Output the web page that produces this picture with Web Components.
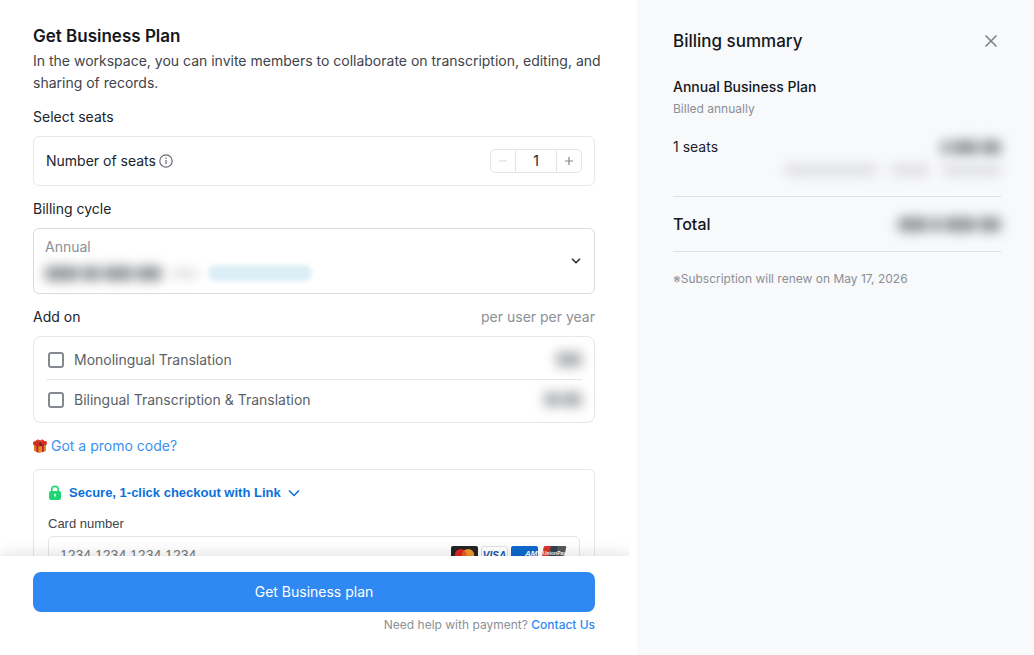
<!DOCTYPE html>
<html lang="en">
<head>
<meta charset="utf-8">
<meta name="viewport" content="width=device-width, initial-scale=1">
<title>Get Business Plan</title>
<style>
  body {
    margin: 0;
    font: 14px/22px Inter, "Liberation Sans", sans-serif;
    color: #20242b;
    background: #fff;
  }
</style>
</head>
<body>
<plan-checkout>
  <plan-heading>
    <span slot="title">Get Business Plan</span>
    In the workspace, you can invite members to collaborate on transcription, editing, and sharing of records.
  </plan-heading>

  <form-section>
    <span slot="label">Select seats</span>
    <seat-stepper value="1">Number of seats</seat-stepper>
  </form-section>

  <form-section>
    <span slot="label">Billing cycle</span>
    <cycle-select></cycle-select>
  </form-section>

  <form-section>
    <span slot="label">Add on</span>
    <span slot="hint">per user per year</span>
    <addon-list>
      <addon-option bars="26">Monolingual Translation</addon-option>
      <addon-option bars="16,20">Bilingual Transcription &amp; Translation</addon-option>
    </addon-list>
  </form-section>

  <promo-link>Got a promo code?</promo-link>
  <card-form></card-form>

  <checkout-footer slot="footer">Get Business plan</checkout-footer>
  <billing-summary slot="summary"></billing-summary>
</plan-checkout>

<script>
/** Create an HTML template element from a string template. */
const html = (strings, ...expressions) => {
  const template = document.createElement('template')
  template.innerHTML = strings.reduce((result, str, i) => result + str + (expressions[i] ?? ''), '')
  return template
}

/** Base class: clones the static template of the subclass into an open shadow root. */
class TemplateElement extends HTMLElement {
  constructor() {
    super()
    this.attachShadow({ mode: 'open' })
    this.shadowRoot.appendChild(this.constructor.template.content.cloneNode(true))
  }

  $(selector) {
    return this.shadowRoot.querySelector(selector)
  }
}

/**
 * A hidden amount, drawn as soft bars.
 *
 * @example
 *
 * <hidden-amount bars="40,20"></hidden-amount>
 */
class HiddenAmount extends TemplateElement {
  static localName = 'hidden-amount'

  static template = html`
    <style>
      :host {
        display: flex;
        gap: 3px;
        filter: blur(6px);
        color: #97999d;
      }
      i {
        height: var(--bar-height, 15px);
        border-radius: 4px;
        background: currentColor;
      }
    </style>
  `

  connectedCallback() {
    this.setAttribute('aria-hidden', 'true')
    for (const width of this.getAttribute('bars').split(',')) {
      const bar = document.createElement('i')
      bar.style.width = `${width}px`
      this.shadowRoot.appendChild(bar)
    }
  }
}

class PlanCheckout extends TemplateElement {
  static localName = 'plan-checkout'

  static template = html`
    <style>
      :host {
        display: grid;
        grid-template-columns: 637fr 397fr;
        height: 100vh;
      }
      main {
        display: flex;
        flex-direction: column;
        min-width: 0;
        min-height: 0;
      }
      .content {
        display: flex;
        flex: 1;
        flex-direction: column;
        gap: 12px;
        min-height: 0;
        padding: 22px 42px 0 33px;
        overflow-y: auto;
        scrollbar-width: none;
      }
      ::slotted(*) {
        flex-shrink: 0;
      }
    </style>
    <main>
      <div class="content"><slot></slot></div>
      <slot name="footer"></slot>
    </main>
    <slot name="summary"></slot>
  `
}

class PlanHeading extends TemplateElement {
  static localName = 'plan-heading'

  static template = html`
    <style>
      :host {
        display: block;
        margin-right: -12px;
      }
      h1 {
        margin: 0;
        font-size: 17px;
        font-weight: 600;
        line-height: 28px;
        color: #14171c;
      }
      p {
        margin: 0;
        color: #40444b;
      }
    </style>
    <h1><slot name="title"></slot></h1>
    <p><slot></slot></p>
  `
}

class FormSection extends TemplateElement {
  static localName = 'form-section'

  static template = html`
    <style>
      :host {
        display: flex;
        flex-direction: column;
        gap: 8px;
      }
      header {
        display: flex;
        justify-content: space-between;
      }
      h2 {
        margin: 0;
        font-size: inherit;
        font-weight: 400;
      }
      .hint {
        color: #8b8f96;
      }
    </style>
    <header>
      <h2><slot name="label"></slot></h2>
      <span class="hint"><slot name="hint"></slot></span>
    </header>
    <slot></slot>
  `
}

class SeatStepper extends TemplateElement {
  static localName = 'seat-stepper'

  static template = html`
    <style>
      :host {
        display: flex;
        align-items: center;
        justify-content: space-between;
        padding: 12px;
        border: 1px solid #e6e7e9;
        border-radius: 6px;
      }
      .name, .stepper {
        display: flex;
        align-items: center;
      }
      .name {
        gap: 3px;
      }
      .stepper {
        border: 1px solid #e3e5e8;
        border-radius: 5px;
      }
      button, input {
        box-sizing: border-box;
        height: 22px;
        padding: 0;
        border: 0;
        background: none;
        font: inherit;
        color: inherit;
      }
      button {
        display: grid;
        place-items: center;
        width: 24px;
        color: #85898f;
      }
      button:disabled {
        color: #dcdee1;
      }
      input {
        width: 42px;
        border: solid #e3e5e8;
        border-width: 0 1px;
        text-align: center;
      }
    </style>
    <span class="name">
      <label for="seats"><slot></slot></label>
      <svg width="14" height="14" viewBox="0 0 14 14" fill="none" stroke="#686c73" stroke-width="1.2" aria-hidden="true">
        <circle cx="7" cy="7" r="6.2"/>
        <path d="M7 6.1v4.2"/>
        <path d="M7 3.5v1.4"/>
      </svg>
    </span>
    <span class="stepper">
      <button type="button" class="less" aria-label="Remove a seat">
        <svg width="8" height="8" stroke="currentColor" stroke-width="1.2"><path d="M0 4h8"/></svg>
      </button>
      <input id="seats" inputmode="numeric">
      <button type="button" class="more" aria-label="Add a seat">
        <svg width="8" height="8" stroke="currentColor" stroke-width="1.2"><path d="M0 4h8M4 0v8"/></svg>
      </button>
    </span>
  `

  connectedCallback() {
    this.setSeats(Number(this.getAttribute('value')))
    this.$('.less').addEventListener('click', () => this.setSeats(this.seats - 1))
    this.$('.more').addEventListener('click', () => this.setSeats(this.seats + 1))
    this.$('input').addEventListener('change', (event) => this.setSeats(Number(event.target.value)))
  }

  setSeats(seats) {
    this.seats = Math.max(1, Math.floor(seats) || 1)
    this.$('input').value = this.seats
    this.$('.less').disabled = this.seats === 1
  }
}

class CycleSelect extends TemplateElement {
  static localName = 'cycle-select'

  static template = html`
    <style>
      :host {
        display: grid;
        align-items: center;
      }
      select, .price, svg {
        grid-area: 1 / 1;
      }
      select {
        box-sizing: border-box;
        width: 100%;
        height: 66px;
        padding: 7px 11px 35px;
        border: 1px solid #d9dbde;
        border-radius: 6px;
        appearance: none;
        background: none;
        font: inherit;
        color: #8b8f96;
      }
      .price {
        display: flex;
        align-self: end;
        align-items: center;
        gap: 10px;
        padding: 0 12px 13px;
        pointer-events: none;
      }
      .period {
        --bar-height: 9px;
        color: #dddee1;
      }
      .saving {
        width: 104px;
        height: 16px;
        border-radius: 8px;
        background: #dceff6;
        filter: blur(2px);
      }
      svg {
        justify-self: end;
        margin-right: 14px;
        pointer-events: none;
      }
    </style>
    <select aria-label="Billing cycle">
      <option>Annual</option>
      <option>Monthly</option>
    </select>
    <span class="price">
      <hidden-amount bars="34,18,30,26"></hidden-amount>
      <hidden-amount class="period" bars="26"></hidden-amount>
      <span class="saving"></span>
    </span>
    <svg width="10" height="6" viewBox="0 0 10 6" fill="none" stroke="#20242b" stroke-width="1.5"><path d="M1 .8l4 4 4-4"/></svg>
  `
}

class AddonList extends TemplateElement {
  static localName = 'addon-list'

  static template = html`
    <style>
      :host {
        display: block;
        padding: 3px 12px;
        border: 1px solid #e6e7e9;
        border-radius: 8px;
      }
      ::slotted(:not(:first-child)) {
        border-top: 1px solid #e6e7e9;
      }
    </style>
    <slot></slot>
  `
}

class AddonOption extends TemplateElement {
  static localName = 'addon-option'

  static template = html`
    <style>
      :host {
        display: flex;
        align-items: center;
        justify-content: space-between;
        min-height: 39px;
        color: #5b5f66;
      }
      label {
        display: flex;
        align-items: center;
        gap: 10px;
      }
      input {
        width: 16px;
        height: 16px;
        margin: 0 0 0 2px;
        border: 2px solid #868a90;
        border-radius: 3px;
        appearance: none;
        background: #fff;
      }
      input:checked {
        border-color: #3088f3;
        background: #3088f3;
      }
      hidden-amount {
        gap: 2px;
        color: #adafb2;
      }
    </style>
    <label><input type="checkbox"><slot></slot></label>
  `

  connectedCallback() {
    const amount = document.createElement('hidden-amount')
    amount.setAttribute('bars', this.getAttribute('bars'))
    this.shadowRoot.appendChild(amount)
  }
}

class PromoLink extends TemplateElement {
  static localName = 'promo-link'

  static template = html`
    <style>
      :host {
        display: flex;
      }
      a {
        display: flex;
        align-items: center;
        gap: 4px;
        color: #3a91f0;
        text-decoration: none;
      }
    </style>
    <a href="#promo">
      <svg width="14" height="14" viewBox="0 0 14 14" aria-hidden="true">
        <path d="M1 5l5 1.6V14l-5-2.2z" fill="#d9782a"/>
        <path d="M6 6.6L13 5v7l-7 2z" fill="#e58a2c"/>
        <path d="M0 3l5-2 9 1.4-.4 3.4L6 7.6.4 6z" fill="#cf2d22"/>
        <path d="M3.4 5.6l1.8.6v7.3l-1.8-.8zM9 5.6l1.9-.5v7.5l-1.9.6z" fill="#bf2620"/>
        <path d="M3 1.6C4.5 0 6.3.4 7 2.2 8 0 10.3-.2 11 1.6 10.5 3.2 8.7 3.8 7 3.6 5.2 3.8 3.6 3 3 1.6z" fill="#e23b2a"/>
        <path d="M5.6 3.4L8 3.3l1.6 3.6-1.9.4z" fill="#6b2a20"/>
      </svg>
      <slot></slot>
    </a>
  `
}

class CardForm extends TemplateElement {
  static localName = 'card-form'

  static template = html`
    <style>
      :host {
        display: block;
        padding: 14px;
        border: 1px solid #e6e7e9;
        border-radius: 6px;
        font: 13px/18px "Liberation Sans", Arial, sans-serif;
      }
      .link {
        display: flex;
        align-items: center;
        gap: 7px;
        padding: 0;
        border: 0;
        background: none;
        font: inherit;
        font-weight: 700;
        color: #0a6fdc;
      }
      label {
        display: block;
        margin: 13px 0 3px;
        color: #40444b;
      }
      .field {
        display: flex;
        align-items: center;
        height: 38px;
        box-sizing: border-box;
        padding: 0 11px;
        border: 1px solid #e3e5e8;
        border-radius: 5px;
      }
      input {
        flex: 1;
        min-width: 0;
        padding: 0;
        border: 0;
        outline: 0;
        background: none;
        font: inherit;
        font-size: 14px;
      }
      input::placeholder {
        color: #757980;
      }
      .brands {
        display: flex;
        gap: 3px;
      }
    </style>
    <button type="button" class="link">
      <svg width="14" height="16" viewBox="0 0 14 16" aria-hidden="true">
        <path d="M3.8 7V4.6a3.2 3.2 0 0 1 6.4 0V7" fill="none" stroke="#2bd77d" stroke-width="1.7"/>
        <rect x="1" y="6" width="12" height="9" rx="2" fill="#1fd673"/>
        <path d="M6.2 8.8h1.6v2.8H6.2z" fill="#fff"/>
      </svg>
      Secure, 1-click checkout with Link
      <svg width="12" height="8" viewBox="0 0 12 8" fill="none" stroke="currentColor" stroke-width="1.5" aria-hidden="true"><path d="M1 1.5l5 5 5-5"/></svg>
    </button>
    <label for="number">Card number</label>
    <div class="field">
      <input id="number" inputmode="numeric" placeholder="1234 1234 1234 1234">
      <span class="brands">
        <svg width="27" height="18" viewBox="0 0 27 18" role="img" aria-label="Mastercard">
          <rect width="27" height="18" rx="2" fill="#252525"/>
          <circle cx="9.8" cy="9" r="6" fill="#e0251f"/>
          <circle cx="17.2" cy="9" r="6" fill="#f09a2b"/>
          <path d="M13.5 4.3a6 6 0 0 1 0 9.4 6 6 0 0 1 0-9.4z" fill="#ee5c24"/>
        </svg>
        <svg width="27" height="18" viewBox="0 0 27 18" role="img" aria-label="Visa">
          <rect x=".5" y=".5" width="26" height="17" rx="2" fill="#fff" stroke="#dfe1e4"/>
          <text x="13.5" y="13" text-anchor="middle" font-size="10" font-weight="700" font-style="italic" fill="#1a55ae">VISA</text>
        </svg>
        <svg width="27" height="18" viewBox="0 0 27 18" role="img" aria-label="American Express">
          <rect width="27" height="18" rx="2" fill="#0f69cd"/>
          <text x="14" y="10" font-size="8" font-weight="700" font-style="italic" fill="#fff">AM</text>
          <text x="14" y="17" font-size="8" font-weight="700" font-style="italic" fill="#fff">EX</text>
        </svg>
        <svg width="27" height="18" viewBox="0 0 27 18" role="img" aria-label="UnionPay">
          <path d="M4 0h7L7 18H2Q0 18 .4 16L2.5 1.5Q3 0 4 0z" fill="#d9332c"/>
          <path d="M10 0h8l-4 18H6z" fill="#33424f"/>
          <path d="M17 0h7q1.5 0 1.2 1.5L22 16.5q-.4 1.500-2 1.500h-7z" fill="#55595f"/>
          <text x="2" y="9" font-size="5" font-weight="700" fill="#fff">UnionPay</text>
        </svg>
      </span>
    </div>
  `
}

class CheckoutFooter extends TemplateElement {
  static localName = 'checkout-footer'

  static template = html`
    <style>
      :host {
        display: block;
        position: relative;
        margin-right: 7px;
        padding: 16px 35px 21px 33px;
        background: #fff;
        box-shadow: 0 -2px 14px rgba(0, 0, 0, .12);
        clip-path: inset(-20px 0 0 0);
      }
      button {
        display: block;
        width: 100%;
        height: 40px;
        border: 0;
        border-radius: 8px;
        background: #3088f3;
        font: inherit;
        color: #fff;
      }
      p {
        margin: 4px 0 0;
        font-size: 12px;
        line-height: 18px;
        text-align: right;
        color: #8b8f96;
      }
      a {
        font-weight: 500;
        color: #3088f3;
        text-decoration: none;
      }
    </style>
    <button type="button"><slot></slot></button>
    <p>Need help with payment? <a href="#contact">Contact Us</a></p>
  `
}

class BillingSummary extends TemplateElement {
  static localName = 'billing-summary'

  static template = html`
    <style>
      :host {
        display: block;
        padding: 27px 33px 0 36px;
        background: #f8f9fb;
      }
      header, .row {
        display: flex;
        align-items: center;
        justify-content: space-between;
      }
      h2, h3, p {
        margin: 0;
        font-weight: 500;
        color: #14171c;
      }
      h2 {
        font-size: 17px;
        line-height: 28px;
      }
      h3 {
        margin-top: 21px;
        font-size: inherit;
      }
      p {
        font-size: 12px;
        font-weight: 400;
        line-height: 22px;
        color: #8b8f96;
      }
      button {
        display: flex;
        padding: 4px;
        border: 0;
        background: none;
        color: #7b7e83;
      }
      .seats {
        margin-top: 16px;
      }
      .detail {
        --bar-height: 12px;
        justify-content: flex-end;
        gap: 14px;
        padding: 6px 0 20px;
        color: #dfe0e3;
      }
      .total {
        padding: 13px 0;
        border: solid #dfe1e4;
        border-width: 1px 0;
        font-size: 16px;
        font-weight: 500;
        line-height: 28px;
        color: #14171c;
      }
      .note {
        margin-top: 16px;
      }
    </style>
    <header>
      <h2>Billing summary</h2>
      <button type="button" aria-label="Close">
        <svg width="12" height="12" viewBox="0 0 12 12" stroke="currentColor" stroke-width="1.5"><path d="M.5 .5l11 11M11.5 .5l-11 11"/></svg>
      </button>
    </header>
    <h3>Annual Business Plan</h3>
    <p>Billed annually</p>
    <div class="row seats">
      <span>1 seats</span>
      <hidden-amount bars="8,26,20"></hidden-amount>
    </div>
    <hidden-amount class="detail" bars="92,38,58"></hidden-amount>
    <div class="row total">
      <span>Total</span>
      <hidden-amount bars="30,10,32,22"></hidden-amount>
    </div>
    <p class="note">※Subscription will renew on May 17, 2026</p>
  `
}

for (const element of [
  HiddenAmount, PlanCheckout, PlanHeading, FormSection, SeatStepper, CycleSelect, AddonList,
  AddonOption, PromoLink, CardForm, CheckoutFooter, BillingSummary
]) {
  customElements.define(element.localName, element)
}
</script>
</body>
</html>
